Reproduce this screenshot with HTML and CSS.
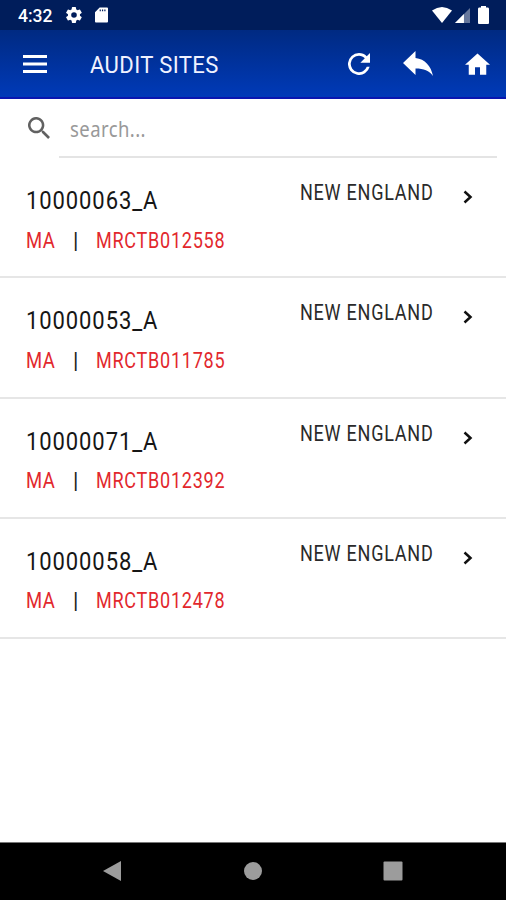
FILE: index.html
```html
<!DOCTYPE html>
<html lang="en">
<head>
<meta charset="utf-8">
<title>Audit Sites</title>
<link rel="stylesheet" href="styles.css">
</head>
<body>
<div class="screen">
  <div class="status">
    <span class="clock">4:32</span>
    <svg class="gear" viewBox="2 2 20 20"><path fill-rule="evenodd" d="M19.4 13a7.500 7.500 0 0 0 0-2l2.100-1.600a.5.5 0 0 0 .1-.6l-2-3.500a.5.5 0 0 0-.6-.2l-2.500 1a7.300 7.300 0 0 0-1.700-1l-.4-2.600a.5.5 0 0 0-.5-.5h-4a.5.5 0 0 0-.5.5L9 5.100a7.300 7.300 0 0 0-1.700 1l-2.500-1a.5.5 0 0 0-.6.200l-2 3.500a.5.5 0 0 0 .1.600L4.500 11a7.500 7.500 0 0 0 0 2l-2.200 1.600a.5.5 0 0 0-.1.600l2 3.500c.1.200.4.300.6.200l2.500-1a7.300 7.300 0 0 0 1.700 1l.4 2.600c0 .3.200.5.500.5h4c.3 0 .5-.2.500-.5l.4-2.600a7.300 7.300 0 0 0 1.700-1l2.500 1c.2.100.5 0 .6-.2l2-3.500a.5.5 0 0 0-.1-.6zM12 15.500a3.500 3.500 0 1 1 0-7 3.500 3.500 0 0 1 0 7z"/></svg>
    <svg class="card" viewBox="0 0 14 16"><path fill-rule="evenodd" d="M5 0h8q1 0 1 1v14q0 1-1 1H1q-1 0-1-1V5zM5 2v2h1.300V2zM7.500 2v2h1.300V2zM10 2v2h1.300V2z"/></svg>
    <svg class="wifi" viewBox="0 0 20 16"><path d="M0 3.500Q10-3.500 20 3.500L10 16z"/></svg>
    <svg class="signal" viewBox="0 0 16 16"><path opacity=".4" d="M16 0v16H0z"/><path d="M9.500 6.500V16H0z"/></svg>
    <svg class="battery" viewBox="0 0 11 18"><path d="M3 0h5v1.500h2q1 0 1 1.500v14q0 1-1 1H1q-1 0-1-1V3q0-1.500 1-1.500h2z"/></svg>
  </div>
  <header class="bar">
    <svg class="menu" viewBox="0 0 24 18"><path d="M0 0h24v3H0zM0 7.500h24v3H0zM0 15h24v3H0z"/></svg>
    <h1 class="title"><span>AUDIT SITES</span></h1>
    <svg class="refresh" viewBox="4 4 16 16"><path d="M17.650 6.350A7.960 7.960 0 0 0 12 4a8 8 0 1 0 7.730 10h-2.080A6 6 0 1 1 12 6c1.660 0 3.140.69 4.220 1.780L13 11h7V4z"/></svg>
    <svg class="reply" viewBox="0 0 30 25"><path d="M0 12L12.500 0v7C22 8 28 15 30 25c-4-5.500-9-7.500-17.500-7.500V24z"/></svg>
    <svg class="home" viewBox="2 3 20 17"><path d="M10 20v-6h4v6h5v-8h3L12 3 2 12h3v8z"/></svg>
  </header>
  <div class="search">
    <svg class="lens" viewBox="3 3 17.500 17.500"><path d="M15.500 14h-.79l-.28-.27A6.500 6.500 0 1 0 13.730 14.430l.27.280v.79l5 4.990L20.490 19zm-6 0a4.500 4.500 0 1 1 0-9 4.500 4.500 0 0 1 0 9z"/></svg>
    <div class="field"><span>search...</span></div>
  </div>
  <ul class="list">
    <li class="item">
      <div class="main"><div class="site"><span>10000063_A</span></div><div class="meta"><span class="state">MA</span><i class="sep">|</i><span class="code">MRCTB012558</span></div></div>
      <div class="region"><span>NEW ENGLAND</span></div>
      <svg class="chev" viewBox="0 0 10 14"><path d="M1.500 1.500L7.500 7l-6 5.500"/></svg>
    </li>
    <li class="item">
      <div class="main"><div class="site"><span>10000053_A</span></div><div class="meta"><span class="state">MA</span><i class="sep">|</i><span class="code">MRCTB011785</span></div></div>
      <div class="region"><span>NEW ENGLAND</span></div>
      <svg class="chev" viewBox="0 0 10 14"><path d="M1.500 1.500L7.500 7l-6 5.500"/></svg>
    </li>
    <li class="item">
      <div class="main"><div class="site"><span>10000071_A</span></div><div class="meta"><span class="state">MA</span><i class="sep">|</i><span class="code">MRCTB012392</span></div></div>
      <div class="region"><span>NEW ENGLAND</span></div>
      <svg class="chev" viewBox="0 0 10 14"><path d="M1.500 1.500L7.500 7l-6 5.500"/></svg>
    </li>
    <li class="item">
      <div class="main"><div class="site"><span>10000058_A</span></div><div class="meta"><span class="state">MA</span><i class="sep">|</i><span class="code">MRCTB012478</span></div></div>
      <div class="region"><span>NEW ENGLAND</span></div>
      <svg class="chev" viewBox="0 0 10 14"><path d="M1.500 1.500L7.500 7l-6 5.500"/></svg>
    </li>
  </ul>
  <nav class="nav">
    <svg viewBox="0 0 20 22"><path d="M1 11L19 1v20z"/></svg>
    <svg viewBox="0 0 20 22"><circle cx="10" cy="11" r="9"/></svg>
    <svg viewBox="0 0 20 22"><rect x=".5" y="1.500" width="19" height="19" rx="1"/></svg>
  </nav>
</div>
</body>
</html>
```

FILE: styles.css
```css
* { box-sizing: border-box; }
body { margin: 0; background: #fff; font-family: Roboto, sans-serif; }
svg { display: block; flex: none; fill: #fff; }
.screen { width: 506px; height: 900px; display: flex; flex-direction: column; overflow: hidden; }
.status { height: 30px; flex: none; display: flex; align-items: center; padding: 0 17px 0 18px; background: #001d5b; color: #fff; }
.clock { width: 48px; font-size: 17.500px; font-weight: 500; line-height: 30px; padding-top: 2px; }
.gear { width: 16px; height: 16px; }
.card { width: 13px; height: 16px; margin-left: 13px; }
.wifi { width: 20px; height: 16px; margin-left: auto; }
.signal { width: 15px; height: 15px; margin-left: 3px; }
.battery { width: 11px; height: 18px; margin-left: 8px; }
.bar { height: 69px; flex: none; display: flex; align-items: center; padding: 0 16px 0 23px; background: linear-gradient(#002a82, #003ab8); border-bottom: 2px solid #0a16b0; }
.menu { width: 24px; height: 18px; }
.title { margin: 0 auto 0 43px; width: 130px; font-size: 24px; line-height: 30px; font-weight: 400; color: #f0f2ff; padding-top: 3px; }
.title span, .field span, .site span, .code, .state, .region span { display: inline-block; white-space: nowrap; transform-origin: 0 50%; }
.title span { transform: scaleX(.92); letter-spacing: .4px; }
.refresh { width: 22px; height: 22px; }
.reply { width: 30px; height: 25px; margin-left: 33px; }
.home { width: 25px; height: 22px; margin-left: 32px; }
.search { height: 59px; flex: none; display: flex; padding: 0 9px 0 28px; }
.lens { width: 22px; height: 22px; margin-top: 18px; fill: #616161; }
.field { margin-left: 9px; flex: 1; border-bottom: 2px solid #e4e4e4; padding: 15px 0 0 11px; font: 21.500px/29px "Noto Sans", sans-serif; color: #999; }
.field span { transform: scaleX(.86); letter-spacing: .5px; }
.list { margin: 0; padding: 0; list-style: none; flex: 1; }
.item { height: 120.250px; display: flex; border-bottom: 2px solid #e6e6e6; padding: 0 33px 0 26px; }
.main { width: 274px; }
.site { margin-top: 26px; font-size: 26.500px; line-height: 32px; color: #161616; }
.site span { transform: scaleX(.83); letter-spacing: 1.100px; }
.meta { display: flex; margin-top: 10.600px; font-size: 22px; line-height: 28px; color: #e2282d; }
.state { width: 47px; transform: scaleX(.84); letter-spacing: .6px; }
.sep { width: 23px; font-style: normal; color: #222; font-size: 22px; line-height: 27px; }
.code { transform: scaleX(.82); letter-spacing: .9px; }
.region { width: 163px; margin-top: 21px; font-size: 22px; line-height: 28px; color: #2a2a2a; }
.region span { transform: scaleX(.82); letter-spacing: .9px; }
.chev { width: 10px; height: 14px; margin-top: 32px; fill: none; stroke: #111; stroke-width: 2.500; }
.nav { height: 58px; flex: none; display: flex; justify-content: space-between; padding: 17px 103px 0 102px; background: #000; border-top: 1px solid #777; }
.nav svg { width: 20px; height: 22px; fill: #9c9c9c; }
```
